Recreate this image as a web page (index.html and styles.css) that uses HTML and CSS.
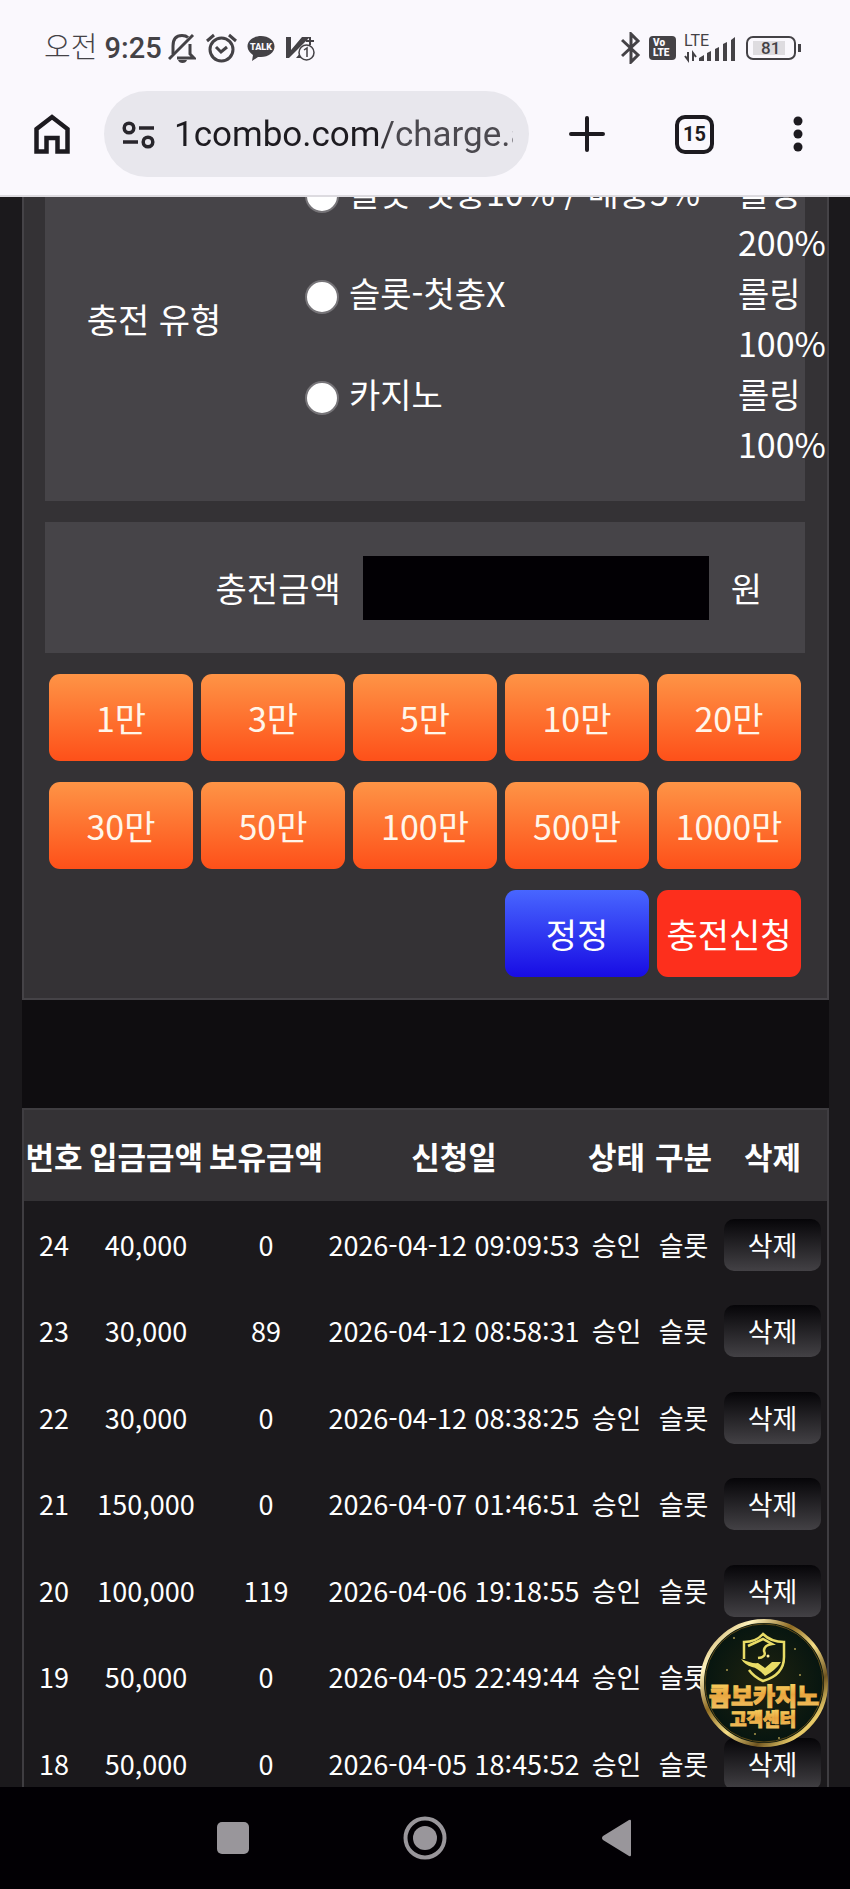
FILE: index.html
```html
<!DOCTYPE html>
<html lang="ko">
<head>
<meta charset="utf-8">
<meta name="viewport" content="width=device-width, initial-scale=1">
<title>충전</title>
<link rel="stylesheet" href="styles.css">
</head>
<body>
<header class="chrome">
  <div class="status">
    <div class="status-side left">
      <span class="clock"><span class="ampm">오전</span> 9:25</span>
      <svg class="icon" width="28" height="30" viewBox="0 0 28 30" fill="none" stroke="#444246" stroke-width="3">
        <path d="M5 21V13Q5 2.500 14 2.500q4 0 6 2M22 11v10l4 4H9"/><path d="M1 26 25 2"/><path d="M10 27h9q-1 3-4.500 3T10 27z" fill="#444246" stroke="none"/>
      </svg>
      <svg class="icon" width="31" height="30" viewBox="0 0 31 30" fill="none" stroke="#444246" stroke-width="3">
        <circle cx="15.500" cy="16.500" r="11.500"/><path d="m10 14 5 5 6-5M1 8l7-6M30 8l-7-6"/>
      </svg>
      <svg class="icon" width="28" height="28" viewBox="0 0 28 28">
        <path fill="#444246" d="M14 2c7.500 0 13.500 4.500 13.500 10.500S21.500 23 14 23l-3 0-6 4 1-6C3 19 .5 16 .5 12.500.5 6.500 6.500 2 14 2z"/>
        <text class="talk" x="14" y="16" text-anchor="middle">TALK</text>
      </svg>
      <svg class="icon" width="30" height="28" viewBox="0 0 30 28">
        <path fill="#444246" d="M1 3h5v13L17 3h8L4 24H1zM11 24l6-7v7z"/>
        <path d="M25 3v8M21 7h8" stroke="#444246" stroke-width="2"/>
        <circle cx="21.500" cy="18.500" r="7.500" fill="#faf8fd" stroke="#444246" stroke-width="1.500"/>
        <path d="m19 16 3-2v9" fill="none" stroke="#444246" stroke-width="1.500"/>
      </svg>
    </div>
    <div class="status-side right">
      <svg class="icon" width="20" height="32" viewBox="0 0 20 32" fill="none" stroke="#444246" stroke-width="3">
        <path d="m1 8 16 15-7 7V2l7 7L1 24"/>
      </svg>
      <span class="volte"><span>Vo</span><span>LTE</span></span>
      <svg class="icon" width="53" height="30" viewBox="0 0 53 30">
        <text class="lte" x="0" y="13">LTE</text>
        <g fill="#444246"><path d="M15 28v-3l5-3v6zM23 20l4-2v10h-4zM31 16l4-2v14h-4zM39 11l4-2v19h-4zM47 7l4-3v24h-4z"/></g>
        <path d="M1 23l3 4v-8M9 28v-8l3 4" fill="none" stroke="#444246" stroke-width="2"/>
      </svg>
      <span class="battery"><span>81</span></span>
    </div>
  </div>
  <div class="toolbar">
    <button class="home" aria-label="홈">
      <svg width="36" height="40" viewBox="0 0 36 40" fill="none" stroke="#1d1b20" stroke-width="4.500"><path d="M2.500 15 18 3l15.500 12v22.500h-10V24h-11v13.500h-10z"/></svg>
    </button>
    <div class="omnibox">
      <svg width="34" height="28" viewBox="0 0 34 28" fill="none" stroke="#28262c" stroke-width="3.500"><circle cx="7" cy="7" r="4.800"/><path d="M17 7h15M1 21h15"/><circle cx="26" cy="21" r="4.800"/></svg>
      <input class="url" type="text" aria-label="주소" value="1combo.com/charge.asp">
    </div>
    <button class="new-tab" aria-label="새 탭">
      <svg width="36" height="36" viewBox="0 0 36 36" stroke="#1d1b20" stroke-width="4" stroke-linecap="round"><path d="M18 2v32M2 18h32"/></svg>
    </button>
    <button class="tabs" aria-label="탭 목록"><span class="tab-count">15</span></button>
    <button class="more" aria-label="메뉴">
      <svg width="10" height="36" viewBox="0 0 10 36" fill="#1d1b20"><circle cx="5" cy="5" r="4.500"/><circle cx="5" cy="18" r="4.500"/><circle cx="5" cy="31" r="4.500"/></svg>
    </button>
  </div>
</header>

<main class="page">
  <form class="panel">
    <fieldset class="box types">
      <div class="types-title" id="type-title">충전 유형</div>
      <div class="options" role="radiogroup" aria-labelledby="type-title">
        <div class="option"><label><input type="radio" name="type">슬롯-첫충10% / 매충5%</label><span class="rolling">롤링 200%</span></div>
        <div class="option"><label><input type="radio" name="type">슬롯-첫충X</label><span class="rolling">롤링 100%</span></div>
        <div class="option"><label><input type="radio" name="type">카지노</label><span class="rolling">롤링 100%</span></div>
      </div>
    </fieldset>
    <div class="box amount">
      <label for="amount">충전금액</label>
      <input id="amount" type="text" inputmode="numeric">
      <span>원</span>
    </div>
    <div class="buttons">
      <button type="button">1만</button>
      <button type="button">3만</button>
      <button type="button">5만</button>
      <button type="button">10만</button>
      <button type="button">20만</button>
      <button type="button">30만</button>
      <button type="button">50만</button>
      <button type="button">100만</button>
      <button type="button">500만</button>
      <button type="button">1000만</button>
      <button type="reset" class="reset">정정</button>
      <button type="submit" class="submit">충전신청</button>
    </div>
  </form>
  <section class="history">
    <table>
      <colgroup><col class="c-no"><col class="c-in"><col class="c-own"><col class="c-date"><col class="c-state"><col class="c-kind"><col class="c-del"></colgroup>
      <thead>
        <tr><th>번호</th><th>입금금액</th><th>보유금액</th><th>신청일</th><th>상태</th><th>구분</th><th>삭제</th></tr>
      </thead>
      <tbody>
        <tr><td>24</td><td>40,000</td><td>0</td><td>2026-04-12 09:09:53</td><td>승인</td><td>슬롯</td><td><button>삭제</button></td></tr>
        <tr><td>23</td><td>30,000</td><td>89</td><td>2026-04-12 08:58:31</td><td>승인</td><td>슬롯</td><td><button>삭제</button></td></tr>
        <tr><td>22</td><td>30,000</td><td>0</td><td>2026-04-12 08:38:25</td><td>승인</td><td>슬롯</td><td><button>삭제</button></td></tr>
        <tr><td>21</td><td>150,000</td><td>0</td><td>2026-04-07 01:46:51</td><td>승인</td><td>슬롯</td><td><button>삭제</button></td></tr>
        <tr><td>20</td><td>100,000</td><td>119</td><td>2026-04-06 19:18:55</td><td>승인</td><td>슬롯</td><td><button>삭제</button></td></tr>
        <tr><td>19</td><td>50,000</td><td>0</td><td>2026-04-05 22:49:44</td><td>승인</td><td>슬롯</td><td><button>삭제</button></td></tr>
        <tr><td>18</td><td>50,000</td><td>0</td><td>2026-04-05 18:45:52</td><td>승인</td><td>슬롯</td><td><button>삭제</button></td></tr>
      </tbody>
    </table>
  </section>
  <a class="support" href="#support" aria-label="콤보카지노 고객센터">
    <svg width="130" height="130" viewBox="0 0 130 130">
      <defs>
        <linearGradient id="rim" x1="0" y1="0" x2="1" y2="1">
          <stop offset="0" stop-color="#a8853c"/><stop offset=".2" stop-color="#fff3bd"/><stop offset=".38" stop-color="#8d6a22"/><stop offset=".55" stop-color="#f5dd86"/><stop offset=".72" stop-color="#6f5420"/><stop offset=".85" stop-color="#e8cb69"/><stop offset="1" stop-color="#a07a2c"/>
        </linearGradient>
        <radialGradient id="disc"><stop offset="0" stop-color="#20230f"/><stop offset="1" stop-color="#061510"/></radialGradient>
        <linearGradient id="gold" x1="0" y1="0" x2="0" y2="1"><stop offset="0" stop-color="#ffe873"/><stop offset=".5" stop-color="#e9a63f"/><stop offset="1" stop-color="#f3c767"/></linearGradient>
      </defs>
      <circle cx="65" cy="65" r="62" fill="url(#disc)" stroke="url(#rim)" stroke-width="4"/>
      <circle cx="65" cy="65" r="59" fill="none" stroke="#5d4a18" stroke-width="1"/>
      <g fill="none" stroke="#e9dc66" stroke-width="2.500">
        <path d="M45 41V24q12 0 19-8 8 8 21 8v15q0 18-21 24-9-4-14-11"/>
        <path d="m49 28 15-7 9 5q-8 1-8 7 3 6-6 7"/>
      </g>
      <path fill="#e9dc66" d="M42 41q11 5 17 4l7 5 7-6h9q-5 8-16 14-7-8-13-9-7-2-11-8z"/>
      <circle cx="69" cy="38" r="1.500" fill="#fff0a0"/>
      <g fill="#a9974d"><circle cx="35" cy="20" r="1"/><circle cx="96" cy="31" r="1"/><circle cx="101" cy="57" r="1"/><circle cx="28" cy="52" r="1"/><circle cx="56" cy="116" r="1"/><circle cx="80" cy="120" r="1"/></g>
      <text class="brand" x="65" y="87" text-anchor="middle">콤보카지노</text>
      <text class="center" x="64" y="108" text-anchor="middle">고객센터</text>
    </svg>
  </a>
</main>

<nav class="sysnav">
  <button aria-label="최근 앱"><svg width="44" height="44" viewBox="0 0 44 44"><rect x="6" y="6" width="32" height="32" rx="5" fill="#99969b"/></svg></button>
  <button aria-label="홈 화면"><svg width="44" height="44" viewBox="0 0 44 44"><circle cx="22" cy="22" r="19.500" fill="none" stroke="#99969b" stroke-width="4"/><circle cx="22" cy="22" r="12" fill="#99969b"/></svg></button>
  <button aria-label="뒤로"><svg width="44" height="44" viewBox="0 0 44 44"><path d="M36 5v34q0 2-2 1L8 24q-2-2 0-4L34 4q2-1 2 1z" fill="#99969b"/></svg></button>
</nav>
</body>
</html>
```

FILE: styles.css
```css
* { box-sizing: border-box; }

body {
  margin: 0;
  height: 100vh;
  display: flex;
  flex-direction: column;
  overflow: hidden;
  background: #1b191c;
  color: #fff;
  font-family: "Noto Sans CJK KR", sans-serif;
  font-size: 34px;
}

button {
  border: 0;
  padding: 0;
  margin: 0;
  background: none;
  color: inherit;
  font: inherit;
  white-space: nowrap;
}

svg { display: block; }

/* Browser chrome */
.chrome {
  position: relative;
  z-index: 2;
  flex: none;
  background: #faf8fd;
  border-bottom: 2px solid #dddbe0;
  padding-bottom: 18px;
}

.status {
  display: flex;
  justify-content: space-between;
  align-items: center;
  height: 91px;
  padding: 4px 49px 0 44px;
  color: #444246;
}

.status-side {
  display: flex;
  align-items: center;
}

.left { gap: 6px; }
.left .icon { margin-right: 4px; }
.right { gap: 8px; }

.clock {
  font-family: Roboto, "Noto Sans CJK KR", sans-serif;
  font-size: 29px;
  font-weight: 500;
  line-height: 36px;
}

.ampm { font-weight: 300; }

.talk {
  font: 900 9px Roboto, sans-serif;
  fill: #faf8fd;
}

.lte {
  font: 400 16px Roboto, sans-serif;
  fill: #444246;
}

.volte {
  display: flex;
  flex-direction: column;
  justify-content: center;
  width: 27px;
  height: 24px;
  padding-left: 4px;
  border-radius: 4px;
  background: #444246;
  color: #faf8fd;
  font: 900 10px/10px Roboto, sans-serif;
}

.battery {
  position: relative;
  width: 50px;
  height: 24px;
  margin: 0 5px 0 1px;
  padding: 3px 4px;
  border: 2px solid #444246;
  border-radius: 7px;
}

.battery span {
  display: block;
  width: 32px;
  margin-left: 1px;
  padding-left: 8px;
  background: #dedce0;
  font: 500 17px/14px Roboto, sans-serif;
}

.battery::after {
  content: "";
  position: absolute;
  right: -7px;
  top: 6px;
  width: 3px;
  height: 8px;
  background: #444246;
}

.toolbar {
  display: flex;
  align-items: center;
  color: #1d1b20;
}

.toolbar button {
  display: flex;
  justify-content: center;
  align-items: center;
  height: 86px;
}

.toolbar .home { width: 104px; }
.toolbar .new-tab { width: 115px; }
.toolbar .tabs { width: 101px; }
.toolbar .more { width: 105px; }

.omnibox {
  flex: 1;
  min-width: 0;
  display: flex;
  align-items: center;
  gap: 18px;
  height: 86px;
  padding: 2px 16px 0 18px;
  border-radius: 43px;
  background: #e8e7ed;
}

.omnibox svg { flex: none; }

.url {
  flex: 1;
  min-width: 0;
  border: 0;
  padding: 0;
  background: linear-gradient(90deg, #1d1b20 60%, #4b494f 64%);
  -webkit-background-clip: text;
  background-clip: text;
  color: transparent;
  font: 400 35px/44px Roboto, sans-serif;
}

.tab-count {
  width: 39px;
  height: 39px;
  border: 4px solid #1d1b20;
  border-radius: 10px;
  font: 700 20px/31px Roboto, sans-serif;
  text-align: center;
}

/* Scrolled page */
.page {
  position: relative;
  flex: 1;
  min-height: 0;
  overflow: hidden;
  padding: 0 21px 0 22px;
}

.panel {
  margin: -86px 0 0;
  padding: 21px 22px 21px 21px;
  border: 2px solid #454347;
  background: #343235;
}

.box {
  margin: 0 0 21px;
  border: 0;
  background: #464448;
}

.types {
  min-width: 0;
  display: grid;
  grid-template-columns: 218px 1fr;
  column-gap: 42px;
  align-items: center;
  padding: 33px 0 31px;
}

.types-title { text-align: center; }

.option {
  display: grid;
  grid-template-columns: 1fr 67px;
  padding-bottom: 1px;
  line-height: 50px;
}

.option label {
  display: flex;
  align-items: center;
  gap: 10px;
  height: 50px;
}

.option input {
  appearance: none;
  width: 34px;
  height: 34px;
  margin: 8px 0 0;
  border: 2px solid #767478;
  border-radius: 50%;
  background: #fff;
}

.amount {
  display: flex;
  justify-content: flex-end;
  align-items: center;
  gap: 22px;
  height: 131px;
  padding-right: 43px;
}

.amount input {
  flex: 0 1 346px;
  min-width: 0;
  height: 64px;
  padding: 0 12px;
  border: 0;
  background: #020004;
  color: #fff;
  font: inherit;
}

.buttons {
  display: grid;
  grid-template-columns: repeat(5, 1fr);
  gap: 21px 8px;
  padding: 0 4px;
}

.buttons button {
  height: 87px;
  border-radius: 11px;
  background: linear-gradient(#fe9446, #fe5019);
  color: #fff6ea;
}

.buttons .reset {
  grid-column: 4;
  background: linear-gradient(#4866ff, #180ce4);
  color: #fff;
}

.buttons .submit {
  background: #fd2f1c;
  color: #fff;
}

.history {
  padding-top: 108px;
  background: #0f0d10;
}

table {
  width: 100%;
  table-layout: fixed;
  border-collapse: separate;
  border-spacing: 0;
  border: 2px solid #3f3d41;
  background: #1b191c;
  font-size: 27px;
  line-height: 40px;
  white-space: nowrap;
}

.c-no { width: 60px; }
.c-in { width: 124px; }
.c-own { width: 116px; }
.c-date { width: 260px; }
.c-state { width: 65px; }
.c-kind { width: 69px; }
.c-del { width: 109px; }

th, td {
  padding: 0;
  text-align: center;
}

th {
  height: 91px;
  background: #343235;
  font-size: 31px;
  font-weight: 700;
}

td { height: 87px; }
tr:nth-child(even) td { height: 86px; }

td button {
  display: block;
  width: 97px;
  height: 52px;
  margin: 0 auto;
  border-radius: 10px;
  background: linear-gradient(#060508, #434145);
}

.support {
  position: absolute;
  right: 21px;
  bottom: 39px;
}

.support text {
  fill: url(#gold);
  stroke: url(#gold);
  stroke-width: 1px;
  font-family: "Noto Sans CJK KR", sans-serif;
  font-weight: 900;
}

.brand { font-size: 24px; }
.center { font-size: 18px; }

/* System navigation */
.sysnav {
  position: relative;
  z-index: 2;
  flex: none;
  display: flex;
  justify-content: center;
  align-items: center;
  gap: 148px;
  height: 102px;
  background: #020004;
}
```
